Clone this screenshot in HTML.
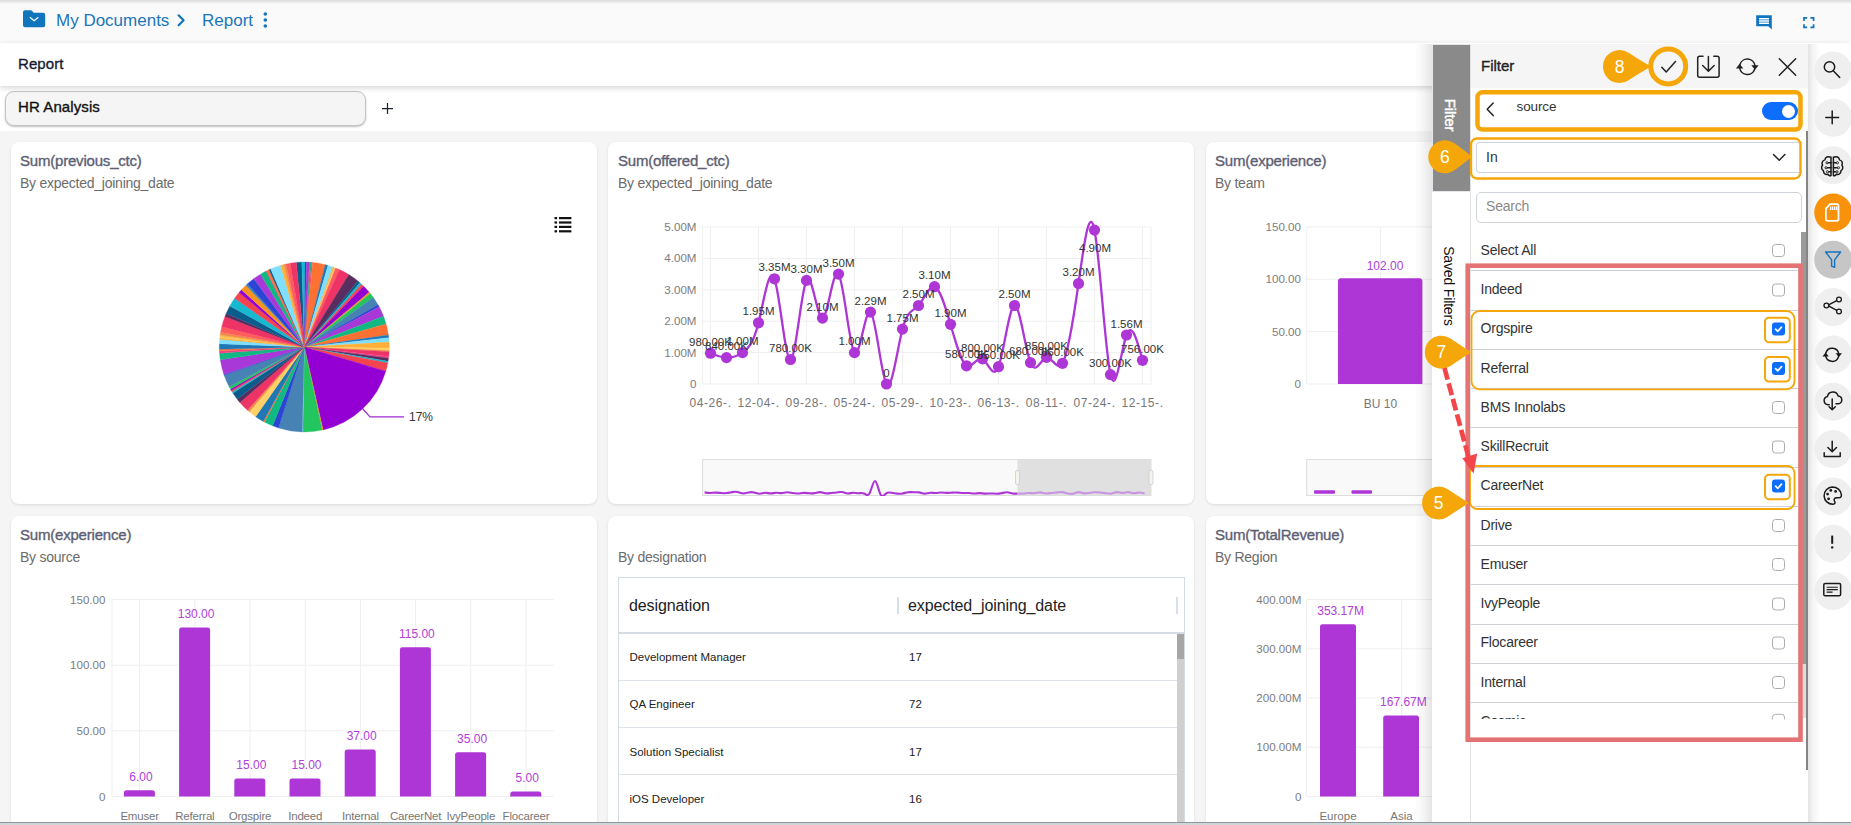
<!DOCTYPE html>
<html><head><meta charset="utf-8"><title>Report</title>
<style>
html,body{margin:0;padding:0;}
body{width:1851px;height:825px;overflow:hidden;position:relative;background:#f5f5f5;font-family:"Liberation Sans",sans-serif;}
div{box-sizing:border-box;}
svg{position:absolute;left:0;top:0;}
svg text{font-family:"Liberation Sans",sans-serif;}
.card{position:absolute;background:#fff;border-radius:8px;box-shadow:0 1px 3px rgba(0,0,0,.11);}
</style></head><body>

<div style="position:absolute;left:0px;top:0px;width:1851px;height:43px;background:#fafafa;"></div>
<div style="position:absolute;left:0px;top:0px;width:1851px;height:4px;background:linear-gradient(#d9d9d9,#fafafa);"></div>
<div style="position:absolute;top:10.5px;font-size:17px;line-height:20px;color:#1b75bc;white-space:nowrap;left:56.0px;">My Documents</div>
<div style="position:absolute;top:10.5px;font-size:17px;line-height:20px;color:#1b75bc;white-space:nowrap;left:202.0px;">Report</div>
<div style="position:absolute;left:0px;top:43px;width:1851px;height:43px;background:#fff;box-shadow:0 2px 6px rgba(0,0,0,.16);z-index:2;"></div>
<div style="position:absolute;top:54.7px;font-size:15px;line-height:18px;color:#161b33;white-space:nowrap;-webkit-text-stroke:0.35px currentColor;letter-spacing:0.1px;left:18.0px;z-index:3;">Report</div>
<div style="position:absolute;left:0px;top:86px;width:1851px;height:45px;background:#fff;"></div>
<div style="position:absolute;left:5px;top:90.5px;width:361px;height:35.5px;background:#f5f5f5;border:1px solid #c4c4c4;border-radius:9px;box-shadow:0 1px 2px rgba(0,0,0,.25);"></div>
<div style="position:absolute;top:97.5px;font-size:15px;line-height:18px;color:#111;white-space:nowrap;-webkit-text-stroke:0.35px currentColor;letter-spacing:0.1px;left:18.0px;">HR Analysis</div>
<div class="card" style="left:11px;top:142px;width:586px;height:362px;"></div>
<div class="card" style="left:608px;top:142px;width:586px;height:362px;"></div>
<div class="card" style="left:1206px;top:142px;width:586px;height:362px;"></div>
<div class="card" style="left:11px;top:516px;width:586px;height:330px;"></div>
<div class="card" style="left:608px;top:516px;width:586px;height:330px;"></div>
<div class="card" style="left:1206px;top:516px;width:586px;height:330px;"></div>
<div style="position:absolute;top:152.0px;font-size:15px;line-height:18px;color:#5d6073;white-space:nowrap;-webkit-text-stroke:0.35px currentColor;letter-spacing:-0.2px;left:20.0px;">Sum(previous_ctc)</div>
<div style="position:absolute;top:175.0px;font-size:14px;line-height:17px;color:#6c6c6c;white-space:nowrap;letter-spacing:-0.25px;left:20.0px;">By expected_joining_date</div>
<div style="position:absolute;top:152.0px;font-size:15px;line-height:18px;color:#5d6073;white-space:nowrap;-webkit-text-stroke:0.35px currentColor;letter-spacing:-0.2px;left:618.0px;">Sum(offered_ctc)</div>
<div style="position:absolute;top:175.0px;font-size:14px;line-height:17px;color:#6c6c6c;white-space:nowrap;letter-spacing:-0.25px;left:618.0px;">By expected_joining_date</div>
<div style="position:absolute;top:152.0px;font-size:15px;line-height:18px;color:#5d6073;white-space:nowrap;-webkit-text-stroke:0.35px currentColor;letter-spacing:-0.2px;left:1215.0px;">Sum(experience)</div>
<div style="position:absolute;top:175.0px;font-size:14px;line-height:17px;color:#6c6c6c;white-space:nowrap;letter-spacing:-0.25px;left:1215.0px;">By team</div>
<div style="position:absolute;top:526.0px;font-size:15px;line-height:18px;color:#5d6073;white-space:nowrap;-webkit-text-stroke:0.35px currentColor;letter-spacing:-0.2px;left:20.0px;">Sum(experience)</div>
<div style="position:absolute;top:549.0px;font-size:14px;line-height:17px;color:#6c6c6c;white-space:nowrap;letter-spacing:-0.25px;left:20.0px;">By source</div>
<div style="position:absolute;top:549.0px;font-size:14px;line-height:17px;color:#6c6c6c;white-space:nowrap;letter-spacing:-0.25px;left:618.0px;">By designation</div>
<div style="position:absolute;top:526.0px;font-size:15px;line-height:18px;color:#5d6073;white-space:nowrap;-webkit-text-stroke:0.35px currentColor;letter-spacing:-0.2px;left:1215.0px;">Sum(TotalRevenue)</div>
<div style="position:absolute;top:549.0px;font-size:14px;line-height:17px;color:#6c6c6c;white-space:nowrap;letter-spacing:-0.25px;left:1215.0px;">By Region</div>
<div style="position:absolute;left:618px;top:577px;width:567px;height:260px;border:1px solid #d5dbe3;background:#fff;"></div>
<div style="position:absolute;left:619px;top:632px;width:565px;height:2px;background:#d5dbe3;"></div>
<div style="position:absolute;left:896.5px;top:597px;width:2px;height:17px;background:#d9dfe8;"></div>
<div style="position:absolute;left:1176px;top:597px;width:2px;height:17px;background:#d9dfe8;"></div>
<div style="position:absolute;top:595.9px;font-size:16px;line-height:19px;color:#222;white-space:nowrap;letter-spacing:-0.1px;left:629.0px;">designation</div>
<div style="position:absolute;top:595.9px;font-size:16px;line-height:19px;color:#222;white-space:nowrap;letter-spacing:-0.1px;left:908.0px;">expected_joining_date</div>
<div style="position:absolute;top:650.2px;font-size:11.5px;line-height:14px;color:#222;white-space:nowrap;left:629.5px;">Development Manager</div>
<div style="position:absolute;top:650.2px;font-size:11.5px;line-height:14px;color:#222;white-space:nowrap;left:909.0px;">17</div>
<div style="position:absolute;left:619px;top:680.0px;width:558px;height:1px;background:#dde2ea;"></div>
<div style="position:absolute;top:697.0px;font-size:11.5px;line-height:14px;color:#222;white-space:nowrap;left:629.5px;">QA Engineer</div>
<div style="position:absolute;top:697.0px;font-size:11.5px;line-height:14px;color:#222;white-space:nowrap;left:909.0px;">72</div>
<div style="position:absolute;left:619px;top:727.2px;width:558px;height:1px;background:#dde2ea;"></div>
<div style="position:absolute;top:745.0px;font-size:11.5px;line-height:14px;color:#222;white-space:nowrap;left:629.5px;">Solution Specialist</div>
<div style="position:absolute;top:745.0px;font-size:11.5px;line-height:14px;color:#222;white-space:nowrap;left:909.0px;">17</div>
<div style="position:absolute;left:619px;top:774.4px;width:558px;height:1px;background:#dde2ea;"></div>
<div style="position:absolute;top:792.0px;font-size:11.5px;line-height:14px;color:#222;white-space:nowrap;left:629.5px;">iOS Developer</div>
<div style="position:absolute;top:792.0px;font-size:11.5px;line-height:14px;color:#222;white-space:nowrap;left:909.0px;">16</div>
<div style="position:absolute;left:619px;top:821.6px;width:558px;height:1px;background:#dde2ea;"></div>
<div style="position:absolute;left:1177px;top:634px;width:7px;height:200px;background:#cfcfcf;"></div>
<div style="position:absolute;left:1177px;top:634px;width:7px;height:25px;background:#a6a6a6;"></div>
<svg width="1851" height="825" viewBox="0 0 1851 825">
<path d="M23,12.2a2,2 0 0 1 2,-2h6.2l2.6,2.6h9.4a2,2 0 0 1 2,2v10.4a2,2 0 0 1 -2,2h-18.2a2,2 0 0 1 -2,-2z" fill="#1175be"/>
<path d="M30.2,17.5l3.9,3.3l3.9,-3.3" fill="none" stroke="#fff" stroke-width="1.15" stroke-linecap="round" stroke-linejoin="round"/>
<path d="M178.6,15.3l5,5l-5,5" fill="none" stroke="#1175be" stroke-width="2.2" stroke-linecap="round" stroke-linejoin="round"/>
<circle cx="265.3" cy="14" r="1.8" fill="#1175be"/>
<circle cx="265.3" cy="20" r="1.8" fill="#1175be"/>
<circle cx="265.3" cy="26" r="1.8" fill="#1175be"/>
<path d="M382,108.6h11M387.5,103.1v11" stroke="#1c2030" stroke-width="1.2" fill="none"/>
<path d="M1756.2,15.2h15.6v14.4l-3.6,-3.4h-12z" fill="#1175be"/>
<path d="M1759,18.7h10M1759,21h10M1759,23.3h10" stroke="#fff" stroke-width="1.5"/>
<path d="M1804,21v-3.2h3.2M1810.4,17.8h3.2v3.2M1813.6,24.2v3.2h-3.2M1807.2,27.4h-3.2v-3.2" fill="none" stroke="#1175be" stroke-width="1.7"/>
<path d="M304.3,347.0L296.30,262.38A85.0,85.0 0 0 1 301.78,262.04Z" fill="#0a5c8a" stroke="#0a5c8a" stroke-width="0.3"/>
<path d="M304.3,347.0L301.78,262.04A85.0,85.0 0 0 1 305.04,262.00Z" fill="#17b9d0" stroke="#17b9d0" stroke-width="0.3"/>
<path d="M304.3,347.0L305.04,262.00A85.0,85.0 0 0 1 306.67,262.03Z" fill="#2b45d4" stroke="#2b45d4" stroke-width="0.3"/>
<path d="M304.3,347.0L306.67,262.03A85.0,85.0 0 0 1 309.49,262.16Z" fill="#a838d8" stroke="#a838d8" stroke-width="0.3"/>
<path d="M304.3,347.0L309.49,262.16A85.0,85.0 0 0 1 310.08,262.20Z" fill="#ee3366" stroke="#ee3366" stroke-width="0.3"/>
<path d="M304.3,347.0L310.08,262.20A85.0,85.0 0 0 1 311.56,262.31Z" fill="#10b981" stroke="#10b981" stroke-width="0.3"/>
<path d="M304.3,347.0L311.56,262.31A85.0,85.0 0 0 1 312.74,262.42Z" fill="#f0408a" stroke="#f0408a" stroke-width="0.3"/>
<path d="M304.3,347.0L312.74,262.42A85.0,85.0 0 0 1 325.29,264.63Z" fill="#ff7033" stroke="#ff7033" stroke-width="0.3"/>
<path d="M304.3,347.0L325.29,264.63A85.0,85.0 0 0 1 328.01,265.38Z" fill="#1f78b4" stroke="#1f78b4" stroke-width="0.3"/>
<path d="M304.3,347.0L328.01,265.38A85.0,85.0 0 0 1 332.95,266.98Z" fill="#80dfff" stroke="#80dfff" stroke-width="0.3"/>
<path d="M304.3,347.0L332.95,266.98A85.0,85.0 0 0 1 334.48,267.54Z" fill="#ffb03b" stroke="#ffb03b" stroke-width="0.3"/>
<path d="M304.3,347.0L334.48,267.54A85.0,85.0 0 0 1 335.59,267.97Z" fill="#ffd166" stroke="#ffd166" stroke-width="0.3"/>
<path d="M304.3,347.0L335.59,267.97A85.0,85.0 0 0 1 339.41,269.59Z" fill="#ff5c5c" stroke="#ff5c5c" stroke-width="0.3"/>
<path d="M304.3,347.0L339.41,269.59A85.0,85.0 0 0 1 348.84,274.60Z" fill="#ee3366" stroke="#ee3366" stroke-width="0.3"/>
<path d="M304.3,347.0L348.84,274.60A85.0,85.0 0 0 1 357.91,281.04Z" fill="#5a2d5f" stroke="#5a2d5f" stroke-width="0.3"/>
<path d="M304.3,347.0L357.91,281.04A85.0,85.0 0 0 1 359.95,282.75Z" fill="#0a5c8a" stroke="#0a5c8a" stroke-width="0.3"/>
<path d="M304.3,347.0L359.95,282.75A85.0,85.0 0 0 1 361.51,284.13Z" fill="#17b9d0" stroke="#17b9d0" stroke-width="0.3"/>
<path d="M304.3,347.0L361.51,284.13A85.0,85.0 0 0 1 363.67,286.17Z" fill="#f4444f" stroke="#f4444f" stroke-width="0.3"/>
<path d="M304.3,347.0L363.67,286.17A85.0,85.0 0 0 1 369.22,292.14Z" fill="#9400d3" stroke="#9400d3" stroke-width="0.3"/>
<path d="M304.3,347.0L369.22,292.14A85.0,85.0 0 0 1 370.36,293.51Z" fill="#f7941d" stroke="#f7941d" stroke-width="0.3"/>
<path d="M304.3,347.0L370.36,293.51A85.0,85.0 0 0 1 373.33,297.40Z" fill="#22c55e" stroke="#22c55e" stroke-width="0.3"/>
<path d="M304.3,347.0L373.33,297.40A85.0,85.0 0 0 1 378.06,304.76Z" fill="#4682b4" stroke="#4682b4" stroke-width="0.3"/>
<path d="M304.3,347.0L378.06,304.76A85.0,85.0 0 0 1 379.21,306.83Z" fill="#2b45d4" stroke="#2b45d4" stroke-width="0.3"/>
<path d="M304.3,347.0L379.21,306.83A85.0,85.0 0 0 1 383.55,316.26Z" fill="#a838d8" stroke="#a838d8" stroke-width="0.3"/>
<path d="M304.3,347.0L383.55,316.26A85.0,85.0 0 0 1 386.13,324.00Z" fill="#10b981" stroke="#10b981" stroke-width="0.3"/>
<path d="M304.3,347.0L386.13,324.00A85.0,85.0 0 0 1 388.45,335.02Z" fill="#ff7033" stroke="#ff7033" stroke-width="0.3"/>
<path d="M304.3,347.0L388.45,335.02A85.0,85.0 0 0 1 388.79,337.67Z" fill="#1f78b4" stroke="#1f78b4" stroke-width="0.3"/>
<path d="M304.3,347.0L388.79,337.67A85.0,85.0 0 0 1 389.16,342.11Z" fill="#80dfff" stroke="#80dfff" stroke-width="0.3"/>
<path d="M304.3,347.0L389.16,342.11A85.0,85.0 0 0 1 389.29,348.34Z" fill="#ffb03b" stroke="#ffb03b" stroke-width="0.3"/>
<path d="M304.3,347.0L389.29,348.34A85.0,85.0 0 0 1 389.23,350.56Z" fill="#ffd166" stroke="#ffd166" stroke-width="0.3"/>
<path d="M304.3,347.0L389.23,350.56A85.0,85.0 0 0 1 389.17,351.74Z" fill="#f08c4a" stroke="#f08c4a" stroke-width="0.3"/>
<path d="M304.3,347.0L389.17,351.74A85.0,85.0 0 0 1 388.77,356.47Z" fill="#ee3366" stroke="#ee3366" stroke-width="0.3"/>
<path d="M304.3,347.0L388.77,356.47A85.0,85.0 0 0 1 388.55,358.24Z" fill="#f0408a" stroke="#f0408a" stroke-width="0.3"/>
<path d="M304.3,347.0L388.55,358.24A85.0,85.0 0 0 1 388.08,361.32Z" fill="#5a2d5f" stroke="#5a2d5f" stroke-width="0.3"/>
<path d="M304.3,347.0L388.08,361.32A85.0,85.0 0 0 1 387.79,362.93Z" fill="#17b9d0" stroke="#17b9d0" stroke-width="0.3"/>
<path d="M304.3,347.0L387.79,362.93A85.0,85.0 0 0 1 385.80,371.14Z" fill="#f4444f" stroke="#f4444f" stroke-width="0.3"/>
<path d="M304.3,347.0L385.80,371.14A85.0,85.0 0 0 1 323.13,429.89Z" fill="#9400d3" stroke="#9400d3" stroke-width="0.3"/>
<path d="M304.3,347.0L323.13,429.89A85.0,85.0 0 0 1 322.12,430.11Z" fill="#f7941d" stroke="#f7941d" stroke-width="0.3"/>
<path d="M304.3,347.0L322.12,430.11A85.0,85.0 0 0 1 302.82,431.99Z" fill="#22c55e" stroke="#22c55e" stroke-width="0.3"/>
<path d="M304.3,347.0L302.82,431.99A85.0,85.0 0 0 1 302.22,431.97Z" fill="#80dfff" stroke="#80dfff" stroke-width="0.3"/>
<path d="M304.3,347.0L302.22,431.97A85.0,85.0 0 0 1 278.46,427.98Z" fill="#4682b4" stroke="#4682b4" stroke-width="0.3"/>
<path d="M304.3,347.0L278.46,427.98A85.0,85.0 0 0 1 272.60,425.87Z" fill="#2b45d4" stroke="#2b45d4" stroke-width="0.3"/>
<path d="M304.3,347.0L272.60,425.87A85.0,85.0 0 0 1 264.39,422.05Z" fill="#10b981" stroke="#10b981" stroke-width="0.3"/>
<path d="M304.3,347.0L264.39,422.05A85.0,85.0 0 0 1 263.22,421.41Z" fill="#ff7033" stroke="#ff7033" stroke-width="0.3"/>
<path d="M304.3,347.0L263.22,421.41A85.0,85.0 0 0 1 255.55,416.63Z" fill="#1f78b4" stroke="#1f78b4" stroke-width="0.3"/>
<path d="M304.3,347.0L255.55,416.63A85.0,85.0 0 0 1 249.32,411.83Z" fill="#ffd166" stroke="#ffd166" stroke-width="0.3"/>
<path d="M304.3,347.0L249.32,411.83A85.0,85.0 0 0 1 247.53,410.27Z" fill="#f08c4a" stroke="#f08c4a" stroke-width="0.3"/>
<path d="M304.3,347.0L247.53,410.27A85.0,85.0 0 0 1 239.86,402.43Z" fill="#ee3366" stroke="#ee3366" stroke-width="0.3"/>
<path d="M304.3,347.0L239.86,402.43A85.0,85.0 0 0 1 237.23,399.21Z" fill="#5a2d5f" stroke="#5a2d5f" stroke-width="0.3"/>
<path d="M304.3,347.0L237.23,399.21A85.0,85.0 0 0 1 232.85,393.05Z" fill="#0a5c8a" stroke="#0a5c8a" stroke-width="0.3"/>
<path d="M304.3,347.0L232.85,393.05A85.0,85.0 0 0 1 232.06,391.79Z" fill="#17b9d0" stroke="#17b9d0" stroke-width="0.3"/>
<path d="M304.3,347.0L232.06,391.79A85.0,85.0 0 0 1 231.21,390.40Z" fill="#f4444f" stroke="#f4444f" stroke-width="0.3"/>
<path d="M304.3,347.0L231.21,390.40A85.0,85.0 0 0 1 230.47,389.11Z" fill="#9400d3" stroke="#9400d3" stroke-width="0.3"/>
<path d="M304.3,347.0L230.47,389.11A85.0,85.0 0 0 1 229.11,386.64Z" fill="#22c55e" stroke="#22c55e" stroke-width="0.3"/>
<path d="M304.3,347.0L229.11,386.64A85.0,85.0 0 0 1 224.13,375.23Z" fill="#4682b4" stroke="#4682b4" stroke-width="0.3"/>
<path d="M304.3,347.0L224.13,375.23A85.0,85.0 0 0 1 223.83,374.39Z" fill="#2b45d4" stroke="#2b45d4" stroke-width="0.3"/>
<path d="M304.3,347.0L223.83,374.39A85.0,85.0 0 0 1 220.28,359.86Z" fill="#a838d8" stroke="#a838d8" stroke-width="0.3"/>
<path d="M304.3,347.0L220.28,359.86A85.0,85.0 0 0 1 219.53,353.23Z" fill="#10b981" stroke="#10b981" stroke-width="0.3"/>
<path d="M304.3,347.0L219.53,353.23A85.0,85.0 0 0 1 219.39,351.00Z" fill="#f0408a" stroke="#f0408a" stroke-width="0.3"/>
<path d="M304.3,347.0L219.39,351.00A85.0,85.0 0 0 1 219.33,349.37Z" fill="#ff7033" stroke="#ff7033" stroke-width="0.3"/>
<path d="M304.3,347.0L219.33,349.37A85.0,85.0 0 0 1 219.36,343.74Z" fill="#1f78b4" stroke="#1f78b4" stroke-width="0.3"/>
<path d="M304.3,347.0L219.36,343.74A85.0,85.0 0 0 1 219.65,339.30Z" fill="#80dfff" stroke="#80dfff" stroke-width="0.3"/>
<path d="M304.3,347.0L219.65,339.30A85.0,85.0 0 0 1 219.85,337.38Z" fill="#ffb03b" stroke="#ffb03b" stroke-width="0.3"/>
<path d="M304.3,347.0L219.85,337.38A85.0,85.0 0 0 1 219.97,336.35Z" fill="#ffd166" stroke="#ffd166" stroke-width="0.3"/>
<path d="M304.3,347.0L219.97,336.35A85.0,85.0 0 0 1 220.17,334.88Z" fill="#ffb03b" stroke="#ffb03b" stroke-width="0.3"/>
<path d="M304.3,347.0L220.17,334.88A85.0,85.0 0 0 1 220.59,332.24Z" fill="#f08c4a" stroke="#f08c4a" stroke-width="0.3"/>
<path d="M304.3,347.0L220.59,332.24A85.0,85.0 0 0 1 221.75,326.72Z" fill="#ff5c5c" stroke="#ff5c5c" stroke-width="0.3"/>
<path d="M304.3,347.0L221.75,326.72A85.0,85.0 0 0 1 224.95,316.54Z" fill="#ee3366" stroke="#ee3366" stroke-width="0.3"/>
<path d="M304.3,347.0L224.95,316.54A85.0,85.0 0 0 1 226.17,313.51Z" fill="#5a2d5f" stroke="#5a2d5f" stroke-width="0.3"/>
<path d="M304.3,347.0L226.17,313.51A85.0,85.0 0 0 1 229.89,305.92Z" fill="#0a5c8a" stroke="#0a5c8a" stroke-width="0.3"/>
<path d="M304.3,347.0L229.89,305.92A85.0,85.0 0 0 1 234.59,298.37Z" fill="#17b9d0" stroke="#17b9d0" stroke-width="0.3"/>
<path d="M304.3,347.0L234.59,298.37A85.0,85.0 0 0 1 239.09,292.48Z" fill="#f4444f" stroke="#f4444f" stroke-width="0.3"/>
<path d="M304.3,347.0L239.09,292.48A85.0,85.0 0 0 1 241.43,289.79Z" fill="#9400d3" stroke="#9400d3" stroke-width="0.3"/>
<path d="M304.3,347.0L241.43,289.79A85.0,85.0 0 0 1 245.90,285.24Z" fill="#f7941d" stroke="#f7941d" stroke-width="0.3"/>
<path d="M304.3,347.0L245.90,285.24A85.0,85.0 0 0 1 247.42,283.83Z" fill="#4682b4" stroke="#4682b4" stroke-width="0.3"/>
<path d="M304.3,347.0L247.42,283.83A85.0,85.0 0 0 1 253.74,278.67Z" fill="#2b45d4" stroke="#2b45d4" stroke-width="0.3"/>
<path d="M304.3,347.0L253.74,278.67A85.0,85.0 0 0 1 260.52,274.14Z" fill="#a838d8" stroke="#a838d8" stroke-width="0.3"/>
<path d="M304.3,347.0L260.52,274.14A85.0,85.0 0 0 1 266.11,271.06Z" fill="#10b981" stroke="#10b981" stroke-width="0.3"/>
<path d="M304.3,347.0L266.11,271.06A85.0,85.0 0 0 1 266.91,270.67Z" fill="#f0408a" stroke="#f0408a" stroke-width="0.3"/>
<path d="M304.3,347.0L266.91,270.67A85.0,85.0 0 0 1 269.05,269.65Z" fill="#ff7033" stroke="#ff7033" stroke-width="0.3"/>
<path d="M304.3,347.0L269.05,269.65A85.0,85.0 0 0 1 270.68,268.93Z" fill="#0a5c8a" stroke="#0a5c8a" stroke-width="0.3"/>
<path d="M304.3,347.0L270.68,268.93A85.0,85.0 0 0 1 280.59,265.38Z" fill="#80dfff" stroke="#80dfff" stroke-width="0.3"/>
<path d="M304.3,347.0L280.59,265.38A85.0,85.0 0 0 1 283.74,264.52Z" fill="#ffb03b" stroke="#ffb03b" stroke-width="0.3"/>
<path d="M304.3,347.0L283.74,264.52A85.0,85.0 0 0 1 285.90,264.01Z" fill="#f08c4a" stroke="#f08c4a" stroke-width="0.3"/>
<path d="M304.3,347.0L285.90,264.01A85.0,85.0 0 0 1 290.27,263.17Z" fill="#ff5c5c" stroke="#ff5c5c" stroke-width="0.3"/>
<path d="M304.3,347.0L290.27,263.17A85.0,85.0 0 0 1 296.30,262.38Z" fill="#ee3366" stroke="#ee3366" stroke-width="0.3"/>
<path d="M362.5,408.5L370,416.8H404" fill="none" stroke="#9d2bd6" stroke-width="1.2"/>
<text x="409.0" y="421.0" font-size="12" fill="#333" text-anchor="start">17%</text>
<rect x="554.5" y="217.0" width="2.6" height="2.2" fill="#111"/><rect x="559" y="217.0" width="12.4" height="2.2" fill="#111"/><rect x="554.5" y="221.4" width="2.6" height="2.2" fill="#111"/><rect x="559" y="221.4" width="12.4" height="2.2" fill="#111"/><rect x="554.5" y="225.8" width="2.6" height="2.2" fill="#111"/><rect x="559" y="225.8" width="12.4" height="2.2" fill="#111"/><rect x="554.5" y="230.2" width="2.6" height="2.2" fill="#111"/><rect x="559" y="230.2" width="12.4" height="2.2" fill="#111"/>
<line x1="702.6" x2="1151.0" y1="384.0" y2="384.0" stroke="#efefef" stroke-width="1"/>
<text x="696.5" y="388.0" font-size="11.6" fill="#7d7d7d" text-anchor="end">0</text>
<line x1="702.6" x2="1151.0" y1="352.6" y2="352.6" stroke="#efefef" stroke-width="1"/>
<text x="696.5" y="356.6" font-size="11.6" fill="#7d7d7d" text-anchor="end">1.00M</text>
<line x1="702.6" x2="1151.0" y1="321.2" y2="321.2" stroke="#efefef" stroke-width="1"/>
<text x="696.5" y="325.2" font-size="11.6" fill="#7d7d7d" text-anchor="end">2.00M</text>
<line x1="702.6" x2="1151.0" y1="289.8" y2="289.8" stroke="#efefef" stroke-width="1"/>
<text x="696.5" y="293.8" font-size="11.6" fill="#7d7d7d" text-anchor="end">3.00M</text>
<line x1="702.6" x2="1151.0" y1="258.4" y2="258.4" stroke="#efefef" stroke-width="1"/>
<text x="696.5" y="262.4" font-size="11.6" fill="#7d7d7d" text-anchor="end">4.00M</text>
<line x1="702.6" x2="1151.0" y1="227.0" y2="227.0" stroke="#efefef" stroke-width="1"/>
<text x="696.5" y="231.0" font-size="11.6" fill="#7d7d7d" text-anchor="end">5.00M</text>
<line x1="702.6" x2="702.6" y1="227.0" y2="384.0" stroke="#efefef" stroke-width="1"/>
<line x1="710.5" x2="710.5" y1="227.0" y2="384.0" stroke="#efefef" stroke-width="1"/>
<line x1="758.5" x2="758.5" y1="227.0" y2="384.0" stroke="#efefef" stroke-width="1"/>
<line x1="806.5" x2="806.5" y1="227.0" y2="384.0" stroke="#efefef" stroke-width="1"/>
<line x1="854.5" x2="854.5" y1="227.0" y2="384.0" stroke="#efefef" stroke-width="1"/>
<line x1="902.5" x2="902.5" y1="227.0" y2="384.0" stroke="#efefef" stroke-width="1"/>
<line x1="950.5" x2="950.5" y1="227.0" y2="384.0" stroke="#efefef" stroke-width="1"/>
<line x1="998.5" x2="998.5" y1="227.0" y2="384.0" stroke="#efefef" stroke-width="1"/>
<line x1="1046.5" x2="1046.5" y1="227.0" y2="384.0" stroke="#efefef" stroke-width="1"/>
<line x1="1094.5" x2="1094.5" y1="227.0" y2="384.0" stroke="#efefef" stroke-width="1"/>
<line x1="1142.5" x2="1142.5" y1="227.0" y2="384.0" stroke="#efefef" stroke-width="1"/>
<line x1="1151.0" x2="1151.0" y1="227.0" y2="384.0" stroke="#efefef" stroke-width="1"/>
<text x="710.5" y="407.3" font-size="12" fill="#777" text-anchor="middle" letter-spacing="0.6">04-26-.</text>
<text x="758.5" y="407.3" font-size="12" fill="#777" text-anchor="middle" letter-spacing="0.6">12-04-.</text>
<text x="806.5" y="407.3" font-size="12" fill="#777" text-anchor="middle" letter-spacing="0.6">09-28-.</text>
<text x="854.5" y="407.3" font-size="12" fill="#777" text-anchor="middle" letter-spacing="0.6">05-24-.</text>
<text x="902.5" y="407.3" font-size="12" fill="#777" text-anchor="middle" letter-spacing="0.6">05-29-.</text>
<text x="950.5" y="407.3" font-size="12" fill="#777" text-anchor="middle" letter-spacing="0.6">10-23-.</text>
<text x="998.5" y="407.3" font-size="12" fill="#777" text-anchor="middle" letter-spacing="0.6">06-13-.</text>
<text x="1046.5" y="407.3" font-size="12" fill="#777" text-anchor="middle" letter-spacing="0.6">08-11-.</text>
<text x="1094.5" y="407.3" font-size="12" fill="#777" text-anchor="middle" letter-spacing="0.6">07-24-.</text>
<text x="1142.5" y="407.3" font-size="12" fill="#777" text-anchor="middle" letter-spacing="0.6">12-15-.</text>
<path d="M710.50,353.23C715.83,355.34 721.17,357.45 726.50,357.62C731.83,357.80 737.17,356.04 742.50,352.60C747.83,349.16 753.17,344.03 758.50,322.77C763.83,301.51 769.17,264.11 774.50,278.81C779.83,293.51 785.17,360.30 790.50,359.51C795.83,358.71 801.17,290.32 806.50,280.38C811.83,270.44 817.17,318.94 822.50,318.06C827.83,317.18 833.17,266.91 838.50,274.10C843.83,281.29 849.17,345.93 854.50,352.60C859.83,359.27 865.17,307.98 870.50,312.09C875.83,316.21 881.17,375.74 886.50,384.00C891.83,392.26 897.17,349.26 902.50,329.05C907.83,308.84 913.17,311.43 918.50,305.50C923.83,299.57 929.17,285.11 934.50,286.66C939.83,288.21 945.17,305.76 950.50,324.34C955.83,342.92 961.17,362.52 966.50,365.79C971.83,369.06 977.17,356.00 982.50,358.88C987.83,361.76 993.17,380.56 998.50,366.73C1003.83,352.90 1009.17,306.42 1014.50,305.50C1019.83,304.58 1025.17,349.21 1030.50,362.65C1035.83,376.08 1041.17,358.32 1046.50,357.31C1051.83,356.30 1057.17,372.05 1062.50,363.28C1067.83,354.50 1073.17,321.21 1078.50,283.52C1083.83,245.83 1089.17,203.75 1094.50,230.14C1099.83,256.53 1105.17,351.38 1110.50,374.58C1115.83,397.78 1121.17,349.34 1126.50,335.02C1131.83,320.69 1137.17,340.48 1142.50,360.26" fill="none" stroke="#ae36d6" stroke-width="2.3" stroke-linejoin="round"/>
<circle cx="710.5" cy="353.2" r="5.6" fill="#ae36d6"/>
<circle cx="726.5" cy="357.6" r="5.6" fill="#ae36d6"/>
<circle cx="742.5" cy="352.6" r="5.6" fill="#ae36d6"/>
<circle cx="758.5" cy="322.8" r="5.6" fill="#ae36d6"/>
<circle cx="774.5" cy="278.8" r="5.6" fill="#ae36d6"/>
<circle cx="790.5" cy="359.5" r="5.6" fill="#ae36d6"/>
<circle cx="806.5" cy="280.4" r="5.6" fill="#ae36d6"/>
<circle cx="822.5" cy="318.1" r="5.6" fill="#ae36d6"/>
<circle cx="838.5" cy="274.1" r="5.6" fill="#ae36d6"/>
<circle cx="854.5" cy="352.6" r="5.6" fill="#ae36d6"/>
<circle cx="870.5" cy="312.1" r="5.6" fill="#ae36d6"/>
<circle cx="886.5" cy="384.0" r="5.6" fill="#ae36d6"/>
<circle cx="902.5" cy="329.1" r="5.6" fill="#ae36d6"/>
<circle cx="918.5" cy="305.5" r="5.6" fill="#ae36d6"/>
<circle cx="934.5" cy="286.7" r="5.6" fill="#ae36d6"/>
<circle cx="950.5" cy="324.3" r="5.6" fill="#ae36d6"/>
<circle cx="966.5" cy="365.8" r="5.6" fill="#ae36d6"/>
<circle cx="982.5" cy="358.9" r="5.6" fill="#ae36d6"/>
<circle cx="998.5" cy="366.7" r="5.6" fill="#ae36d6"/>
<circle cx="1014.5" cy="305.5" r="5.6" fill="#ae36d6"/>
<circle cx="1030.5" cy="362.6" r="5.6" fill="#ae36d6"/>
<circle cx="1046.5" cy="357.3" r="5.6" fill="#ae36d6"/>
<circle cx="1062.5" cy="363.3" r="5.6" fill="#ae36d6"/>
<circle cx="1078.5" cy="283.5" r="5.6" fill="#ae36d6"/>
<circle cx="1094.5" cy="230.1" r="5.6" fill="#ae36d6"/>
<circle cx="1110.5" cy="374.6" r="5.6" fill="#ae36d6"/>
<circle cx="1126.5" cy="335.0" r="5.6" fill="#ae36d6"/>
<circle cx="1142.5" cy="360.3" r="5.6" fill="#ae36d6"/>
<text x="710.5" y="345.8" font-size="11.5" fill="#333" text-anchor="middle">980.00K</text>
<text x="726.5" y="350.2" font-size="11.5" fill="#333" text-anchor="middle">840.00K</text>
<text x="742.5" y="345.2" font-size="11.5" fill="#333" text-anchor="middle">1.00M</text>
<text x="758.5" y="315.4" font-size="11.5" fill="#333" text-anchor="middle">1.95M</text>
<text x="774.5" y="271.4" font-size="11.5" fill="#333" text-anchor="middle">3.35M</text>
<text x="790.5" y="352.1" font-size="11.5" fill="#333" text-anchor="middle">780.00K</text>
<text x="806.5" y="273.0" font-size="11.5" fill="#333" text-anchor="middle">3.30M</text>
<text x="822.5" y="310.7" font-size="11.5" fill="#333" text-anchor="middle">2.10M</text>
<text x="838.5" y="266.7" font-size="11.5" fill="#333" text-anchor="middle">3.50M</text>
<text x="854.5" y="345.2" font-size="11.5" fill="#333" text-anchor="middle">1.00M</text>
<text x="870.5" y="304.7" font-size="11.5" fill="#333" text-anchor="middle">2.29M</text>
<text x="886.5" y="376.6" font-size="11.5" fill="#333" text-anchor="middle">0</text>
<text x="902.5" y="321.7" font-size="11.5" fill="#333" text-anchor="middle">1.75M</text>
<text x="918.5" y="298.1" font-size="11.5" fill="#333" text-anchor="middle">2.50M</text>
<text x="934.5" y="279.3" font-size="11.5" fill="#333" text-anchor="middle">3.10M</text>
<text x="950.5" y="316.9" font-size="11.5" fill="#333" text-anchor="middle">1.90M</text>
<text x="966.5" y="358.4" font-size="11.5" fill="#333" text-anchor="middle">580.00K</text>
<text x="982.5" y="351.5" font-size="11.5" fill="#333" text-anchor="middle">800.00K</text>
<text x="998.5" y="359.3" font-size="11.5" fill="#333" text-anchor="middle">550.00K</text>
<text x="1014.5" y="298.1" font-size="11.5" fill="#333" text-anchor="middle">2.50M</text>
<text x="1030.5" y="355.2" font-size="11.5" fill="#333" text-anchor="middle">680.00K</text>
<text x="1046.5" y="349.9" font-size="11.5" fill="#333" text-anchor="middle">850.00K</text>
<text x="1062.5" y="355.9" font-size="11.5" fill="#333" text-anchor="middle">660.00K</text>
<text x="1078.5" y="276.1" font-size="11.5" fill="#333" text-anchor="middle">3.20M</text>
<text x="1095.0" y="252.4" font-size="11.5" fill="#333" text-anchor="middle">4.90M</text>
<text x="1110.5" y="367.2" font-size="11.5" fill="#333" text-anchor="middle">300.00K</text>
<text x="1126.5" y="327.6" font-size="11.5" fill="#333" text-anchor="middle">1.56M</text>
<text x="1142.5" y="352.9" font-size="11.5" fill="#333" text-anchor="middle">756.00K</text>
<rect x="702.6" y="459.5" width="448.4" height="36" fill="#f9f9f9" stroke="#ddd" stroke-width="1"/>
<rect x="1017.5" y="459.5" width="133.5" height="36" fill="#e0e0e0"/>
<clipPath id="mz1"><rect x="702.6" y="459" width="314.9" height="37"/></clipPath><clipPath id="mz2"><rect x="1017.5" y="459" width="133.5" height="37"/></clipPath>
<path d="M704.60,492.40C706.43,492.67 708.27,492.93 710.10,492.93C711.93,492.92 713.77,492.64 715.60,492.63C717.43,492.62 719.27,492.87 721.10,493.03C722.93,493.19 724.77,493.26 726.60,493.06C728.43,492.87 730.27,492.42 732.10,492.11C733.93,491.80 735.77,491.64 737.60,492.02C739.43,492.40 741.27,493.32 743.10,493.42C744.93,493.53 746.77,492.82 748.60,492.44C750.43,492.06 752.27,491.99 754.10,492.40C755.93,492.80 757.77,493.67 759.60,493.69C761.43,493.71 763.27,492.88 765.10,492.80C766.93,492.72 768.77,493.38 770.60,493.42C772.43,493.46 774.27,492.88 776.10,492.81C777.93,492.74 779.77,493.19 781.60,493.09C783.43,492.98 785.27,492.32 787.10,492.26C788.93,492.19 790.77,492.73 792.60,493.08C794.43,493.43 796.27,493.59 798.10,493.48C799.93,493.36 801.77,492.95 803.60,492.89C805.43,492.82 807.27,493.09 809.10,493.26C810.93,493.43 812.77,493.49 814.60,493.14C816.43,492.80 818.27,492.05 820.10,492.11C821.93,492.17 823.77,493.03 825.60,493.29C827.43,493.55 829.27,493.20 831.10,493.00C832.93,492.81 834.77,492.77 836.60,492.51C838.43,492.26 840.27,491.78 842.10,492.05C843.93,492.32 845.77,493.33 847.60,493.47C849.43,493.62 851.27,492.90 853.10,492.80C854.93,492.71 856.77,493.24 858.60,493.22C860.43,493.20 862.27,492.63 864.10,493.49C865.93,494.35 867.77,496.64 869.60,493.21C871.43,489.78 873.27,480.63 875.10,481.00C876.93,481.37 878.77,491.25 880.60,494.60C882.43,497.95 884.27,494.75 886.10,493.36C887.93,491.97 889.77,492.40 891.60,492.76C893.43,493.11 895.27,493.41 897.10,493.59C898.93,493.77 900.77,493.84 902.60,493.49C904.43,493.15 906.27,492.40 908.10,492.17C909.93,491.93 911.77,492.20 913.60,492.23C915.43,492.26 917.27,492.04 919.10,492.37C920.93,492.70 922.77,493.59 924.60,493.64C926.43,493.69 928.27,492.90 930.10,492.74C931.93,492.59 933.77,493.07 935.60,493.07C937.43,493.06 939.27,492.58 941.10,492.51C942.93,492.44 944.77,492.78 946.60,492.86C948.43,492.94 950.27,492.77 952.10,492.66C953.93,492.54 955.77,492.49 957.60,492.60C959.43,492.70 961.27,492.95 963.10,492.99C964.93,493.04 966.77,492.87 968.60,492.99C970.43,493.11 972.27,493.52 974.10,493.54C975.93,493.55 977.77,493.17 979.60,493.16C981.43,493.15 983.27,493.50 985.10,493.58C986.93,493.66 988.77,493.45 990.60,493.46C992.43,493.46 994.27,493.67 996.10,493.68C997.93,493.70 999.77,493.52 1001.60,493.14C1003.43,492.76 1005.27,492.18 1007.10,492.28C1008.93,492.37 1010.77,493.14 1012.60,493.46C1014.43,493.79 1016.27,493.66 1018.10,493.64C1019.93,493.62 1021.77,493.70 1023.60,493.54C1025.43,493.38 1027.27,492.97 1029.10,492.97C1030.93,492.97 1032.77,493.38 1034.60,493.21C1036.43,493.05 1038.27,492.32 1040.10,492.36C1041.93,492.40 1043.77,493.21 1045.60,493.41C1047.43,493.62 1049.27,493.21 1051.10,492.98C1052.93,492.74 1054.77,492.69 1056.60,492.48C1058.43,492.28 1060.27,491.93 1062.10,492.11C1063.93,492.29 1065.77,492.99 1067.60,493.45C1069.43,493.91 1071.27,494.12 1073.10,493.68C1074.93,493.25 1076.77,492.18 1078.60,492.15C1080.43,492.12 1082.27,493.13 1084.10,493.36C1085.93,493.59 1087.77,493.03 1089.60,492.70C1091.43,492.37 1093.27,492.27 1095.10,492.26C1096.93,492.24 1098.77,492.31 1100.60,492.50C1102.43,492.69 1104.27,493.02 1106.10,493.31C1107.93,493.60 1109.77,493.86 1111.60,493.48C1113.43,493.11 1115.27,492.09 1117.10,492.08C1118.93,492.06 1120.77,493.04 1122.60,493.04C1124.43,493.05 1126.27,492.07 1128.10,492.08C1129.93,492.08 1131.77,493.08 1133.60,493.22C1135.43,493.36 1137.27,492.66 1139.10,492.56C1140.93,492.47 1142.77,492.98 1144.60,493.50" fill="none" stroke="#ae36d6" stroke-width="2.1" stroke-linejoin="round" clip-path="url(#mz1)"/>
<path d="M704.60,492.40C706.43,492.67 708.27,492.93 710.10,492.93C711.93,492.92 713.77,492.64 715.60,492.63C717.43,492.62 719.27,492.87 721.10,493.03C722.93,493.19 724.77,493.26 726.60,493.06C728.43,492.87 730.27,492.42 732.10,492.11C733.93,491.80 735.77,491.64 737.60,492.02C739.43,492.40 741.27,493.32 743.10,493.42C744.93,493.53 746.77,492.82 748.60,492.44C750.43,492.06 752.27,491.99 754.10,492.40C755.93,492.80 757.77,493.67 759.60,493.69C761.43,493.71 763.27,492.88 765.10,492.80C766.93,492.72 768.77,493.38 770.60,493.42C772.43,493.46 774.27,492.88 776.10,492.81C777.93,492.74 779.77,493.19 781.60,493.09C783.43,492.98 785.27,492.32 787.10,492.26C788.93,492.19 790.77,492.73 792.60,493.08C794.43,493.43 796.27,493.59 798.10,493.48C799.93,493.36 801.77,492.95 803.60,492.89C805.43,492.82 807.27,493.09 809.10,493.26C810.93,493.43 812.77,493.49 814.60,493.14C816.43,492.80 818.27,492.05 820.10,492.11C821.93,492.17 823.77,493.03 825.60,493.29C827.43,493.55 829.27,493.20 831.10,493.00C832.93,492.81 834.77,492.77 836.60,492.51C838.43,492.26 840.27,491.78 842.10,492.05C843.93,492.32 845.77,493.33 847.60,493.47C849.43,493.62 851.27,492.90 853.10,492.80C854.93,492.71 856.77,493.24 858.60,493.22C860.43,493.20 862.27,492.63 864.10,493.49C865.93,494.35 867.77,496.64 869.60,493.21C871.43,489.78 873.27,480.63 875.10,481.00C876.93,481.37 878.77,491.25 880.60,494.60C882.43,497.95 884.27,494.75 886.10,493.36C887.93,491.97 889.77,492.40 891.60,492.76C893.43,493.11 895.27,493.41 897.10,493.59C898.93,493.77 900.77,493.84 902.60,493.49C904.43,493.15 906.27,492.40 908.10,492.17C909.93,491.93 911.77,492.20 913.60,492.23C915.43,492.26 917.27,492.04 919.10,492.37C920.93,492.70 922.77,493.59 924.60,493.64C926.43,493.69 928.27,492.90 930.10,492.74C931.93,492.59 933.77,493.07 935.60,493.07C937.43,493.06 939.27,492.58 941.10,492.51C942.93,492.44 944.77,492.78 946.60,492.86C948.43,492.94 950.27,492.77 952.10,492.66C953.93,492.54 955.77,492.49 957.60,492.60C959.43,492.70 961.27,492.95 963.10,492.99C964.93,493.04 966.77,492.87 968.60,492.99C970.43,493.11 972.27,493.52 974.10,493.54C975.93,493.55 977.77,493.17 979.60,493.16C981.43,493.15 983.27,493.50 985.10,493.58C986.93,493.66 988.77,493.45 990.60,493.46C992.43,493.46 994.27,493.67 996.10,493.68C997.93,493.70 999.77,493.52 1001.60,493.14C1003.43,492.76 1005.27,492.18 1007.10,492.28C1008.93,492.37 1010.77,493.14 1012.60,493.46C1014.43,493.79 1016.27,493.66 1018.10,493.64C1019.93,493.62 1021.77,493.70 1023.60,493.54C1025.43,493.38 1027.27,492.97 1029.10,492.97C1030.93,492.97 1032.77,493.38 1034.60,493.21C1036.43,493.05 1038.27,492.32 1040.10,492.36C1041.93,492.40 1043.77,493.21 1045.60,493.41C1047.43,493.62 1049.27,493.21 1051.10,492.98C1052.93,492.74 1054.77,492.69 1056.60,492.48C1058.43,492.28 1060.27,491.93 1062.10,492.11C1063.93,492.29 1065.77,492.99 1067.60,493.45C1069.43,493.91 1071.27,494.12 1073.10,493.68C1074.93,493.25 1076.77,492.18 1078.60,492.15C1080.43,492.12 1082.27,493.13 1084.10,493.36C1085.93,493.59 1087.77,493.03 1089.60,492.70C1091.43,492.37 1093.27,492.27 1095.10,492.26C1096.93,492.24 1098.77,492.31 1100.60,492.50C1102.43,492.69 1104.27,493.02 1106.10,493.31C1107.93,493.60 1109.77,493.86 1111.60,493.48C1113.43,493.11 1115.27,492.09 1117.10,492.08C1118.93,492.06 1120.77,493.04 1122.60,493.04C1124.43,493.05 1126.27,492.07 1128.10,492.08C1129.93,492.08 1131.77,493.08 1133.60,493.22C1135.43,493.36 1137.27,492.66 1139.10,492.56C1140.93,492.47 1142.77,492.98 1144.60,493.50" fill="none" stroke="#c994e2" stroke-width="2.1" stroke-linejoin="round" clip-path="url(#mz2)"/>
<rect x="1015.5" y="470.5" width="4" height="14" rx="1.5" fill="#f4f4ee" stroke="#ccc" stroke-width="0.8"/>
<rect x="1149.0" y="470.5" width="4" height="14" rx="1.5" fill="#f4f4ee" stroke="#ccc" stroke-width="0.8"/>
<line x1="1306.7" x2="1500" y1="384.0" y2="384.0" stroke="#efefef"/>
<text x="1301.0" y="388.0" font-size="11.6" fill="#7d7d7d" text-anchor="end">0</text>
<line x1="1306.7" x2="1500" y1="331.6" y2="331.6" stroke="#efefef"/>
<text x="1301.0" y="335.6" font-size="11.6" fill="#7d7d7d" text-anchor="end">50.00</text>
<line x1="1306.7" x2="1500" y1="279.3" y2="279.3" stroke="#efefef"/>
<text x="1301.0" y="283.3" font-size="11.6" fill="#7d7d7d" text-anchor="end">100.00</text>
<line x1="1306.7" x2="1500" y1="226.9" y2="226.9" stroke="#efefef"/>
<text x="1301.0" y="230.9" font-size="11.6" fill="#7d7d7d" text-anchor="end">150.00</text>
<line x1="1306.7" x2="1306.7" y1="227" y2="384.0" stroke="#efefef"/>
<line x1="1380.4" x2="1380.4" y1="227" y2="384.0" stroke="#efefef"/>
<path d="M1338.0,384.0V281.2Q1338.0,278.2 1341.0,278.2H1419.4Q1422.4,278.2 1422.4,281.2V384.0Z" fill="#ae36d6"/>
<text x="1385.0" y="269.8" font-size="12" fill="#b040d8" text-anchor="middle">102.00</text>
<text x="1380.4" y="407.5" font-size="12" fill="#777" text-anchor="middle">BU 10</text>
<rect x="1306.7" y="459.5" width="200" height="36" fill="#f9f9f9" stroke="#ddd"/>
<rect x="1314" y="490.3" width="21" height="3.4" rx="1" fill="#ae36d6"/><rect x="1351.5" y="490.3" width="20.5" height="3.4" rx="1" fill="#ae36d6"/>
<line x1="112.0" x2="553.7" y1="796.5" y2="796.5" stroke="#efefef"/>
<text x="105.5" y="800.5" font-size="11.6" fill="#7d7d7d" text-anchor="end">0</text>
<line x1="112.0" x2="553.7" y1="730.8" y2="730.8" stroke="#efefef"/>
<text x="105.5" y="734.8" font-size="11.6" fill="#7d7d7d" text-anchor="end">50.00</text>
<line x1="112.0" x2="553.7" y1="665.2" y2="665.2" stroke="#efefef"/>
<text x="105.5" y="669.2" font-size="11.6" fill="#7d7d7d" text-anchor="end">100.00</text>
<line x1="112.0" x2="553.7" y1="599.5" y2="599.5" stroke="#efefef"/>
<text x="105.5" y="603.5" font-size="11.6" fill="#7d7d7d" text-anchor="end">150.00</text>
<line x1="112.0" x2="112.0" y1="599.5" y2="796.5" stroke="#efefef"/>
<line x1="139.6" x2="139.6" y1="599.5" y2="796.5" stroke="#efefef"/>
<line x1="194.8" x2="194.8" y1="599.5" y2="796.5" stroke="#efefef"/>
<line x1="250.0" x2="250.0" y1="599.5" y2="796.5" stroke="#efefef"/>
<line x1="305.2" x2="305.2" y1="599.5" y2="796.5" stroke="#efefef"/>
<line x1="360.4" x2="360.4" y1="599.5" y2="796.5" stroke="#efefef"/>
<line x1="415.6" x2="415.6" y1="599.5" y2="796.5" stroke="#efefef"/>
<line x1="470.8" x2="470.8" y1="599.5" y2="796.5" stroke="#efefef"/>
<line x1="526.0" x2="526.0" y1="599.5" y2="796.5" stroke="#efefef"/>
<path d="M123.9,796.5V792.8Q123.9,790.3 126.4,790.3H152.4Q154.9,790.3 154.9,792.8V796.5Z" fill="#ae36d6"/>
<text x="140.9" y="781.0" font-size="12" fill="#b040d8" text-anchor="middle">6.00</text>
<text x="139.6" y="819.8" font-size="11.5" fill="#777" text-anchor="middle" letter-spacing="-0.2">Emuser</text>
<path d="M179.1,796.5V630.0Q179.1,627.5 181.6,627.5H207.6Q210.1,627.5 210.1,630.0V796.5Z" fill="#ae36d6"/>
<text x="196.1" y="618.2" font-size="12" fill="#b040d8" text-anchor="middle">130.00</text>
<text x="194.8" y="819.8" font-size="11.5" fill="#777" text-anchor="middle" letter-spacing="-0.2">Referral</text>
<path d="M234.3,796.5V781.0Q234.3,778.5 236.8,778.5H262.8Q265.3,778.5 265.3,781.0V796.5Z" fill="#ae36d6"/>
<text x="251.3" y="769.2" font-size="12" fill="#b040d8" text-anchor="middle">15.00</text>
<text x="250.0" y="819.8" font-size="11.5" fill="#777" text-anchor="middle" letter-spacing="-0.2">Orgspire</text>
<path d="M289.5,796.5V781.0Q289.5,778.5 292.0,778.5H318.0Q320.5,778.5 320.5,781.0V796.5Z" fill="#ae36d6"/>
<text x="306.5" y="769.2" font-size="12" fill="#b040d8" text-anchor="middle">15.00</text>
<text x="305.2" y="819.8" font-size="11.5" fill="#777" text-anchor="middle" letter-spacing="-0.2">Indeed</text>
<path d="M344.7,796.5V752.1Q344.7,749.6 347.2,749.6H373.2Q375.7,749.6 375.7,752.1V796.5Z" fill="#ae36d6"/>
<text x="361.7" y="740.3" font-size="12" fill="#b040d8" text-anchor="middle">37.00</text>
<text x="360.4" y="819.8" font-size="11.5" fill="#777" text-anchor="middle" letter-spacing="-0.2">Internal</text>
<path d="M399.9,796.5V649.7Q399.9,647.2 402.4,647.2H428.4Q430.9,647.2 430.9,649.7V796.5Z" fill="#ae36d6"/>
<text x="416.9" y="637.9" font-size="12" fill="#b040d8" text-anchor="middle">115.00</text>
<text x="415.6" y="819.8" font-size="11.5" fill="#777" text-anchor="middle" letter-spacing="-0.2">CareerNet</text>
<path d="M455.1,796.5V754.7Q455.1,752.2 457.6,752.2H483.6Q486.1,752.2 486.1,754.7V796.5Z" fill="#ae36d6"/>
<text x="472.1" y="742.9" font-size="12" fill="#b040d8" text-anchor="middle">35.00</text>
<text x="470.8" y="819.8" font-size="11.5" fill="#777" text-anchor="middle" letter-spacing="-0.2">IvyPeople</text>
<path d="M510.3,796.5V794.1Q510.3,791.6 512.8,791.6H538.8Q541.3,791.6 541.3,794.1V796.5Z" fill="#ae36d6"/>
<text x="527.3" y="782.3" font-size="12" fill="#b040d8" text-anchor="middle">5.00</text>
<text x="526.0" y="819.8" font-size="11.5" fill="#777" text-anchor="middle" letter-spacing="-0.2">Flocareer</text>
<line x1="1306.4" x2="1500" y1="796.5" y2="796.5" stroke="#efefef"/>
<text x="1301.4" y="800.5" font-size="11.6" fill="#7d7d7d" text-anchor="end">0</text>
<line x1="1306.4" x2="1500" y1="747.2" y2="747.2" stroke="#efefef"/>
<text x="1301.4" y="751.2" font-size="11.6" fill="#7d7d7d" text-anchor="end">100.00M</text>
<line x1="1306.4" x2="1500" y1="698.0" y2="698.0" stroke="#efefef"/>
<text x="1301.4" y="702.0" font-size="11.6" fill="#7d7d7d" text-anchor="end">200.00M</text>
<line x1="1306.4" x2="1500" y1="648.8" y2="648.8" stroke="#efefef"/>
<text x="1301.4" y="652.8" font-size="11.6" fill="#7d7d7d" text-anchor="end">300.00M</text>
<line x1="1306.4" x2="1500" y1="599.5" y2="599.5" stroke="#efefef"/>
<text x="1301.4" y="603.5" font-size="11.6" fill="#7d7d7d" text-anchor="end">400.00M</text>
<line x1="1306.4" x2="1306.4" y1="599.5" y2="796.5" stroke="#efefef"/>
<line x1="1401.5" x2="1401.5" y1="599.5" y2="796.5" stroke="#efefef"/>
<line x1="1465" x2="1465" y1="599.5" y2="796.5" stroke="#efefef"/>
<path d="M1320.0,796.5V626.8Q1320.0,624.3 1322.5,624.3H1353.5Q1356.0,624.3 1356.0,626.8V796.5Z" fill="#ae36d6"/>
<path d="M1383.2,796.5V718.0Q1383.2,715.5 1385.7,715.5H1416.5Q1419.0,715.5 1419.0,718.0V796.5Z" fill="#ae36d6"/>
<text x="1340.6" y="615.2" font-size="12" fill="#b040d8" text-anchor="middle">353.17M</text>
<text x="1403.4" y="706.2" font-size="12" fill="#b040d8" text-anchor="middle">167.67M</text>
<text x="1338.0" y="819.8" font-size="11.5" fill="#777" text-anchor="middle">Europe</text>
<text x="1401.5" y="819.8" font-size="11.5" fill="#777" text-anchor="middle">Asia</text>
</svg>
<div style="position:absolute;left:1414px;top:44px;width:18px;height:778px;background:linear-gradient(90deg,rgba(0,0,0,0),rgba(0,0,0,.03) 45%,rgba(0,0,0,.10));z-index:10;"></div>
<div style="position:absolute;left:1431.5px;top:43.5px;width:376.5px;height:778.5px;background:#fff;z-index:10;"></div>
<div style="position:absolute;left:1431.5px;top:43.5px;width:39px;height:148.5px;background:#8a8a8a;border:1.5px solid #e3e7ec;z-index:11;"></div>
<div style="position:absolute;left:1470px;top:44px;width:1px;height:778px;background:#e2e2e2;z-index:11;"></div>
<div style="position:absolute;left:1470.5px;top:43.5px;width:337.5px;height:44.5px;background:#f5f5f5;z-index:11;"></div>
<div style="position:absolute;z-index:12;left:1432px;top:115px;width:38px;height:0;"><div style="position:absolute;left:18px;top:0;transform:translate(-50%,-50%) rotate(90deg);font-size:15px;-webkit-text-stroke:0.45px #fff;color:#fff;white-space:nowrap;letter-spacing:-0.1px;transform-origin:center;">Filter</div></div>
<div style="position:absolute;z-index:12;left:1432px;top:286px;width:38px;height:0;"><div style="position:absolute;left:17px;top:0;transform:translate(-50%,-50%) rotate(90deg);font-size:14px;color:#111;white-space:nowrap;letter-spacing:-0.15px;">Saved Filters</div></div>
<div style="position:absolute;top:57.0px;font-size:15px;line-height:18px;color:#222;white-space:nowrap;-webkit-text-stroke:0.35px currentColor;left:1481.0px;z-index:12;">Filter</div>
<div style="position:absolute;top:99.0px;font-size:13.5px;line-height:16px;color:#333;white-space:nowrap;letter-spacing:-0.1px;left:1516.5px;z-index:12;">source</div>
<div style="position:absolute;left:1762px;top:102px;width:36px;height:18px;background:#0d6efd;border-radius:9px;z-index:12;"></div>
<div style="position:absolute;left:1782px;top:104.5px;width:13px;height:13px;background:#fff;border-radius:50%;z-index:12;"></div>
<div style="position:absolute;left:1476px;top:142px;width:326px;height:31px;border:1px solid #ced4da;border-right:none;border-radius:4px 0 0 4px;background:#fff;z-index:12;"></div>
<div style="position:absolute;top:149.0px;font-size:14px;line-height:17px;color:#333;white-space:nowrap;left:1486.0px;z-index:12;">In</div>
<div style="position:absolute;left:1476px;top:191.5px;width:326px;height:31px;border:1px solid #ced4da;border-radius:5px;background:#fff;z-index:12;"></div>
<div style="position:absolute;top:197.8px;font-size:14px;line-height:17px;color:#8a8a8a;white-space:nowrap;letter-spacing:-0.2px;left:1486.0px;z-index:12;">Search</div>
<div style="position:absolute;top:242.0px;font-size:14px;line-height:17px;color:#333;white-space:nowrap;letter-spacing:-0.2px;left:1480.5px;z-index:12;">Select All</div>
<div style="position:absolute;z-index:12;left:1471px;top:269px;width:330px;height:450.3px;overflow:hidden;">
<div style="position:absolute;left:0;top:1.3px;width:330px;height:1px;background:#cdd1d6;"></div>
<div style="position:absolute;left:9.5px;top:12.1px;font-size:14px;line-height:17px;color:#333;letter-spacing:-0.2px;white-space:nowrap;">Indeed</div>
<div style="position:absolute;left:0;top:40.6px;width:330px;height:1px;background:#cdd1d6;"></div>
<div style="position:absolute;left:9.5px;top:51.4px;font-size:14px;line-height:17px;color:#333;letter-spacing:-0.2px;white-space:nowrap;">Orgspire</div>
<div style="position:absolute;left:0;top:79.8px;width:330px;height:1px;background:#cdd1d6;"></div>
<div style="position:absolute;left:9.5px;top:90.6px;font-size:14px;line-height:17px;color:#333;letter-spacing:-0.2px;white-space:nowrap;">Referral</div>
<div style="position:absolute;left:0;top:119.1px;width:330px;height:1px;background:#cdd1d6;"></div>
<div style="position:absolute;left:9.5px;top:129.9px;font-size:14px;line-height:17px;color:#333;letter-spacing:-0.2px;white-space:nowrap;">BMS Innolabs</div>
<div style="position:absolute;left:0;top:158.3px;width:330px;height:1px;background:#cdd1d6;"></div>
<div style="position:absolute;left:9.5px;top:169.1px;font-size:14px;line-height:17px;color:#333;letter-spacing:-0.2px;white-space:nowrap;">SkillRecruit</div>
<div style="position:absolute;left:0;top:197.6px;width:330px;height:1px;background:#cdd1d6;"></div>
<div style="position:absolute;left:9.5px;top:208.4px;font-size:14px;line-height:17px;color:#333;letter-spacing:-0.2px;white-space:nowrap;">CareerNet</div>
<div style="position:absolute;left:0;top:236.8px;width:330px;height:1px;background:#cdd1d6;"></div>
<div style="position:absolute;left:9.5px;top:247.6px;font-size:14px;line-height:17px;color:#333;letter-spacing:-0.2px;white-space:nowrap;">Drive</div>
<div style="position:absolute;left:0;top:276.0px;width:330px;height:1px;background:#cdd1d6;"></div>
<div style="position:absolute;left:9.5px;top:286.8px;font-size:14px;line-height:17px;color:#333;letter-spacing:-0.2px;white-space:nowrap;">Emuser</div>
<div style="position:absolute;left:0;top:315.3px;width:330px;height:1px;background:#cdd1d6;"></div>
<div style="position:absolute;left:9.5px;top:326.1px;font-size:14px;line-height:17px;color:#333;letter-spacing:-0.2px;white-space:nowrap;">IvyPeople</div>
<div style="position:absolute;left:0;top:354.5px;width:330px;height:1px;background:#cdd1d6;"></div>
<div style="position:absolute;left:9.5px;top:365.3px;font-size:14px;line-height:17px;color:#333;letter-spacing:-0.2px;white-space:nowrap;">Flocareer</div>
<div style="position:absolute;left:0;top:393.8px;width:330px;height:1px;background:#cdd1d6;"></div>
<div style="position:absolute;left:9.5px;top:404.6px;font-size:14px;line-height:17px;color:#333;letter-spacing:-0.2px;white-space:nowrap;">Internal</div>
<div style="position:absolute;left:0;top:433.0px;width:330px;height:1px;background:#cdd1d6;"></div>
<div style="position:absolute;left:9.5px;top:443.8px;font-size:14px;line-height:17px;color:#333;letter-spacing:-0.2px;white-space:nowrap;">Cosmic</div>
</div>
<div style="position:absolute;left:1801px;top:231.5px;width:6.5px;height:432px;background:#9a9a9a;z-index:12;"></div>
<div style="position:absolute;left:1803.3px;top:663.5px;width:2.8px;height:54.5px;background:#dedede;z-index:12;"></div>
<div style="position:absolute;left:1806px;top:130.5px;width:2.3px;height:639.5px;background:#858585;z-index:12;"></div>
<svg width="1851" height="825" viewBox="0 0 1851 825" style="z-index:20;">
<rect x="1772.5" y="244.5" width="12" height="12" rx="3" fill="#fff" stroke="#adadad" stroke-width="1"/>
<rect x="1772.5" y="284.0" width="12" height="12" rx="3" fill="#fff" stroke="#adadad" stroke-width="1"/>
<rect x="1772" y="322.5" width="13" height="13" rx="3" fill="#0d6efd"/><path d="M1775.6,329.2l2.1,2.1l3.8,-4.1" fill="none" stroke="#fff" stroke-width="1.7" stroke-linecap="round" stroke-linejoin="round"/>
<rect x="1772" y="362.0" width="13" height="13" rx="3" fill="#0d6efd"/><path d="M1775.6,368.7l2.1,2.1l3.8,-4.1" fill="none" stroke="#fff" stroke-width="1.7" stroke-linecap="round" stroke-linejoin="round"/>
<rect x="1772.5" y="401.5" width="12" height="12" rx="3" fill="#fff" stroke="#adadad" stroke-width="1"/>
<rect x="1772.5" y="441.0" width="12" height="12" rx="3" fill="#fff" stroke="#adadad" stroke-width="1"/>
<rect x="1772" y="479.5" width="13" height="13" rx="3" fill="#0d6efd"/><path d="M1775.6,486.2l2.1,2.1l3.8,-4.1" fill="none" stroke="#fff" stroke-width="1.7" stroke-linecap="round" stroke-linejoin="round"/>
<rect x="1772.5" y="519.5" width="12" height="12" rx="3" fill="#fff" stroke="#adadad" stroke-width="1"/>
<rect x="1772.5" y="558.5" width="12" height="12" rx="3" fill="#fff" stroke="#adadad" stroke-width="1"/>
<rect x="1772.5" y="598.0" width="12" height="12" rx="3" fill="#fff" stroke="#adadad" stroke-width="1"/>
<rect x="1772.5" y="637.0" width="12" height="12" rx="3" fill="#fff" stroke="#adadad" stroke-width="1"/>
<rect x="1772.5" y="676.5" width="12" height="12" rx="3" fill="#fff" stroke="#adadad" stroke-width="1"/>
<path d="M1772.5,719.3v-2a3,3 0 0 1 3,-3h6a3,3 0 0 1 3,3v2" fill="none" stroke="#adadad"/>
<path d="M1661.8,67.2l4.4,4.7l9.3,-10.3" fill="none" stroke="#222" stroke-width="1.5" stroke-linecap="round" stroke-linejoin="round" stroke-width="2"/>
<path d="M1703,56.2h-3.3a2,2 0 0 0 -2,2v17a2,2 0 0 0 2,2h17.4a2,2 0 0 0 2,-2v-17a2,2 0 0 0 -2,-2h-3.3M1708.4,56.5v14.5M1702.6,65.5l5.8,5.8l5.8,-5.8" fill="none" stroke="#222" stroke-width="1.5" stroke-linecap="round" stroke-linejoin="round"/>
<path d="M1739.90,64.68A7.7,7.7 0 0 1 1754.93,65.73M1754.70,68.92A7.7,7.7 0 0 1 1739.67,67.87" fill="none" stroke="#222" stroke-width="1.5" stroke-linecap="round"/><path d="M1751.30,65.20h7.39l-3.70,4.62zM1743.30,68.40h-7.39l3.70,-4.62z" fill="#222"/>
<path d="M1779.3,58.8l16.4,16.4M1795.7,58.8l-16.4,16.4" fill="none" stroke="#222" stroke-width="1.5" stroke-linecap="round" stroke-linejoin="round" stroke-width="1.4"/>
<path d="M1493.2,103l-6,6.3l6,6.3" fill="none" stroke="#222" stroke-width="1.5" stroke-linecap="round" stroke-linejoin="round" stroke-width="1.4"/>
<path d="M1773.5,154.5l5.7,5.7l5.7,-5.7" fill="none" stroke="#222" stroke-width="1.5" stroke-linecap="round" stroke-linejoin="round" stroke-width="1.8"/>
<circle cx="1668.2" cy="66.4" r="17.5" fill="none" stroke="#f5a70a" stroke-width="5"/>
<rect x="1477.5" y="92.3" width="323" height="37.2" rx="5" fill="none" stroke="#f5a70a" stroke-width="4.5"/>
<rect x="1471" y="138.5" width="329.5" height="40" rx="6" fill="none" stroke="#f5a70a" stroke-width="2.4"/>
<rect x="1471.5" y="311" width="323" height="78.3" rx="8" fill="none" stroke="#f5a70a" stroke-width="1.8"/>
<rect x="1470" y="466" width="324.5" height="43" rx="7" fill="none" stroke="#f5a70a" stroke-width="1.8"/>
<rect x="1765" y="317.8" width="24.8" height="24.5" rx="4" fill="none" stroke="#f5a70a" stroke-width="2"/>
<rect x="1765" y="357.1" width="24.8" height="24.5" rx="4" fill="none" stroke="#f5a70a" stroke-width="2"/>
<rect x="1765" y="474.8" width="24.8" height="24.5" rx="4" fill="none" stroke="#f5a70a" stroke-width="2"/>
<rect x="1467.7" y="265.7" width="332.8" height="474" fill="none" stroke="#e57373" stroke-width="4.6"/>
<path d="M1628.7,52.8A16.5,16.5 0 1 0 1628.7,80.2Q1637.0,74.6 1651.0,66.5Q1637.0,58.4 1628.7,52.8Z" fill="#f5a70a"/><text x="1619.5" y="72.6" font-size="17.5" fill="#fff" text-anchor="middle">8</text>
<path d="M1454.0,143.1A16.5,16.5 0 1 0 1454.0,170.5Q1460.7,166.0 1472.0,156.8Q1460.7,147.6 1454.0,143.1Z" fill="#f5a70a"/><text x="1444.8" y="162.9" font-size="17.5" fill="#fff" text-anchor="middle">6</text>
<path d="M1450.5,338.5A16.5,16.5 0 1 0 1450.5,365.9Q1458.2,360.7 1471.0,352.2Q1458.2,343.7 1450.5,338.5Z" fill="#f5a70a"/><text x="1441.3" y="358.3" font-size="17.5" fill="#fff" text-anchor="middle">7</text>
<path d="M1447.8,489.3A16.5,16.5 0 1 0 1447.8,516.7Q1455.7,511.4 1469.0,503.0Q1455.7,494.6 1447.8,489.3Z" fill="#f5a70a"/><text x="1438.6" y="509.1" font-size="17.5" fill="#fff" text-anchor="middle">5</text>
<path d="M1444.5,368L1468.5,457" fill="none" stroke="#f3464b" stroke-width="4.7" stroke-dasharray="12,4"/>
<path d="M1462.3,458.2L1477.2,453.6L1473.6,473.5Z" fill="#f3464b"/>
</svg>
<div style="position:absolute;left:1808px;top:44px;width:43px;height:778px;background:linear-gradient(90deg,#e3e3e3 0,#f4f4f4 5px,#fff 12px);z-index:30;"></div>
<svg width="1851" height="825" viewBox="0 0 1851 825" style="z-index:31;">
<circle cx="1833.2" cy="70.5" r="19" fill="#efefef"/>
<circle cx="1833.2" cy="117.8" r="19" fill="#efefef"/>
<circle cx="1833.2" cy="165.2" r="19" fill="#efefef"/>
<circle cx="1833.2" cy="212.5" r="19" fill="#f7920a"/>
<circle cx="1833.2" cy="259.8" r="19" fill="#c6c6c6"/>
<circle cx="1833.2" cy="307.1" r="19" fill="#efefef"/>
<circle cx="1833.2" cy="354.5" r="19" fill="#efefef"/>
<circle cx="1833.2" cy="401.8" r="19" fill="#efefef"/>
<circle cx="1833.2" cy="449.1" r="19" fill="#efefef"/>
<circle cx="1833.2" cy="496.5" r="19" fill="#efefef"/>
<circle cx="1833.2" cy="543.8" r="19" fill="#efefef"/>
<circle cx="1833.2" cy="591.1" r="19" fill="#efefef"/>
<circle cx="1829.5" cy="66.9" r="5.2" fill="none" stroke="#1a1a1a" stroke-width="1.5" stroke-linecap="round" stroke-linejoin="round"/><path d="M1833.5,71.1l6.2,6.4" fill="none" stroke="#1a1a1a" stroke-width="1.5" stroke-linecap="round" stroke-linejoin="round" stroke-width="2.3"/>
<path d="M1825.8,117.42999999999999h12.8M1832.2,111.03v12.8" fill="none" stroke="#1a1a1a" stroke-width="1.5" stroke-linecap="round" stroke-linejoin="round" stroke-width="1.3"/>
<path d="M1831.0,157.26c-3,-1.5 -6,0 -6,2.6c-2.8,0.6 -3.6,3.4 -2.4,5.2c-1.6,1.8 -1.2,4.6 0.8,5.6c0,2.8 2.4,4.4 4.6,3.6c1,1.6 2.4,1.8 3,1.2z" fill="none" stroke="#1a1a1a" stroke-width="1.5" stroke-linecap="round" stroke-linejoin="round" stroke-width="1.2"/>
<path d="M1833.4,157.26c3,-1.5 6,0 6,2.6c2.8,0.6 3.6,3.4 2.4,5.2c1.6,1.8 1.2,4.6 -0.8,5.6c0,2.8 -2.4,4.4 -4.6,3.6c-1,1.6 -2.4,1.8 -3,1.2z" fill="none" stroke="#1a1a1a" stroke-width="1.5" stroke-linecap="round" stroke-linejoin="round" stroke-width="1.2"/>
<path d="M1831.0,162.76h-3M1831.0,167.76h-4M1831.0,171.76h-2.6M1833.4,162.76h3M1833.4,167.76h4M1833.4,171.76h2.6" fill="none" stroke="#1a1a1a" stroke-width="1.5" stroke-linecap="round" stroke-linejoin="round" stroke-width="1"/>
<circle cx="1827.0" cy="162.76" r="1.1" fill="#efefef" stroke="#1a1a1a" stroke-width="0.9"/>
<circle cx="1826.0" cy="167.76" r="1.1" fill="#efefef" stroke="#1a1a1a" stroke-width="0.9"/>
<circle cx="1827.4" cy="171.76" r="1.1" fill="#efefef" stroke="#1a1a1a" stroke-width="0.9"/>
<circle cx="1837.4" cy="162.76" r="1.1" fill="#efefef" stroke="#1a1a1a" stroke-width="0.9"/>
<circle cx="1838.4" cy="167.76" r="1.1" fill="#efefef" stroke="#1a1a1a" stroke-width="0.9"/>
<circle cx="1837.0" cy="171.76" r="1.1" fill="#efefef" stroke="#1a1a1a" stroke-width="0.9"/>
<path d="M1830.0,204.19h7a1.5,1.5 0 0 1 1.5,1.5v13.6a1.5,1.5 0 0 1 -1.5,1.5h-9.6a1.5,1.5 0 0 1 -1.5,-1.5v-10.6z" fill="none" stroke="#fff" stroke-width="1.7" stroke-linejoin="round"/>
<path d="M1830.6000000000001,206.49v3.4M1832.6000000000001,206.49v3.4M1834.6000000000001,206.49v3.4M1836.6000000000001,206.49v3.4" stroke="#fff" stroke-width="1.4" fill="none"/>
<path d="M1825.6000000000001,252.01999999999998h15l-6,7.8v7.6l-3,-1.2v-6.4z" fill="none" stroke="#1474c4" stroke-width="1.4" stroke-linejoin="round"/>
<path d="M1836.8,300.54999999999995l-9.2,4.9l9.2,5" fill="none" stroke="#1a1a1a" stroke-width="1.5" stroke-linecap="round" stroke-linejoin="round" stroke-width="1.4"/>
<circle cx="1839.0" cy="299.54999999999995" r="2.4" fill="#efefef" stroke="#1a1a1a" stroke-width="1.3"/>
<circle cx="1826.4" cy="305.45" r="2.4" fill="#efefef" stroke="#1a1a1a" stroke-width="1.3"/>
<circle cx="1839.0" cy="311.54999999999995" r="2.4" fill="#efefef" stroke="#1a1a1a" stroke-width="1.3"/>
<path d="M1825.86,352.96A6.6,6.6 0 0 1 1838.74,353.86M1838.54,356.60A6.6,6.6 0 0 1 1825.66,355.70" fill="none" stroke="#1a1a1a" stroke-width="1.5" stroke-linecap="round"/><path d="M1835.63,353.18h6.34l-3.17,3.96zM1828.77,356.38h-6.34l3.17,-3.96z" fill="#1a1a1a"/>
<path d="M1829.2,404.71h-1.2a4.2,4.2 0 0 1 -0.5,-8.3a5.5,5.5 0 0 1 10.6,-0.5a4,4 0 0 1 0.5,7.9h-2.6" fill="none" stroke="#1a1a1a" stroke-width="1.5" stroke-linecap="round" stroke-linejoin="round" stroke-width="1.4"/>
<path d="M1832.2,399.11v10.4M1829.1000000000001,406.71l3.1,3.1l3.1,-3.1" fill="none" stroke="#1a1a1a" stroke-width="1.5" stroke-linecap="round" stroke-linejoin="round" stroke-width="1.4"/>
<path d="M1832.2,441.14v10.6M1827.9,447.53999999999996l4.3,4.3l4.3,-4.3M1824.2,452.74v3.8h16v-3.8" fill="none" stroke="#1a1a1a" stroke-width="1.5" stroke-linecap="round" stroke-linejoin="round"/>
<path d="M1832.4,486.96999999999997a8.6,8.6 0 1 0 0.6,17.2c2.2,0 2.4,-1.6 1.6,-2.8c-1.2,-1.8 0,-3.6 2,-3.6h2.2c1.8,0 2.8,-1.2 2.6,-3c-0.5,-4.5 -4.4,-7.8 -9,-7.8z" fill="none" stroke="#1a1a1a" stroke-width="1.5" stroke-linecap="round" stroke-linejoin="round" stroke-width="1.4"/>
<circle cx="1827.6000000000001" cy="494.07" r="1.4" fill="#1a1a1a"/>
<circle cx="1830.8" cy="490.46999999999997" r="1.4" fill="#1a1a1a"/>
<circle cx="1835.6000000000001" cy="491.46999999999997" r="1.4" fill="#1a1a1a"/>
<circle cx="1828.6000000000001" cy="498.87" r="1.4" fill="#1a1a1a"/>
<path d="M1832.2,535.5999999999999v8.2" stroke="#1a1a1a" stroke-width="2" fill="none"/><circle cx="1832.2" cy="547.4" r="1.2" fill="#1a1a1a"/>
<rect x="1823.8" y="583.43" width="16.8" height="12.4" rx="1.4" fill="none" stroke="#1a1a1a" stroke-width="1.5" stroke-linecap="round" stroke-linejoin="round" stroke-width="1.4"/>
<path d="M1826.6000000000001,587.23h11.2M1826.6000000000001,589.63h11.2M1826.6000000000001,592.03h6" stroke="#1a1a1a" stroke-width="1.2" fill="none"/>
</svg>
<div style="position:absolute;left:0px;top:821.5px;width:1851px;height:1.2px;background:#8e979b;z-index:50;"></div>
<div style="position:absolute;left:0px;top:822.7px;width:1851px;height:3px;background:#cfd6d9;z-index:50;"></div>
</body></html>
